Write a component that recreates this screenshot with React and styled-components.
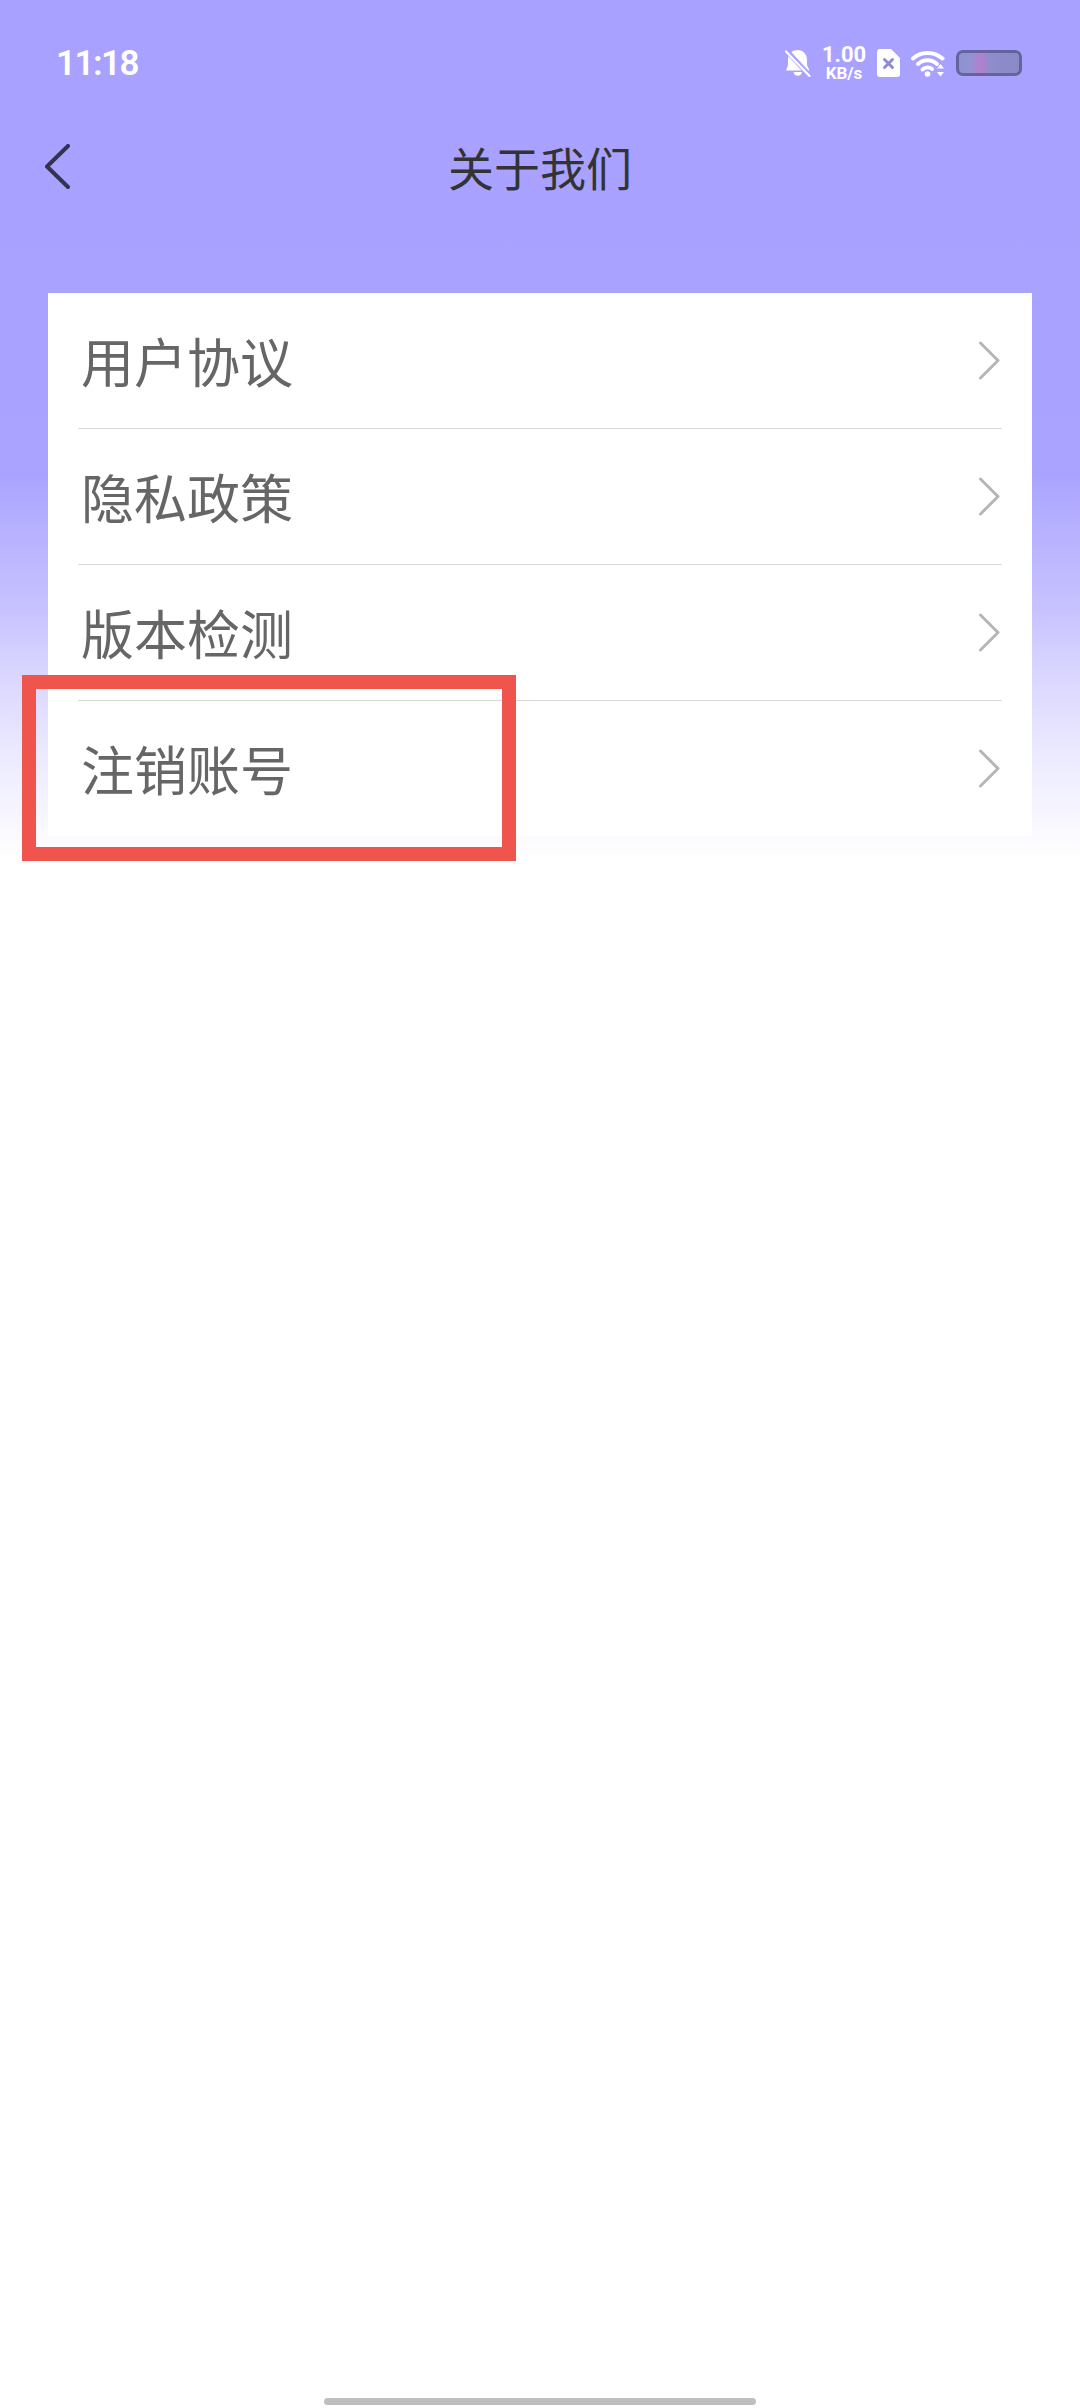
import React from 'react'
import styled, { createGlobalStyle } from 'styled-components'

const GlobalStyle = createGlobalStyle`
  html, body {
    margin: 0;
    padding: 0;
    background: #fff;
  }
`
const Page = styled.div`
  position: relative;
  display: flex;
  flex-direction: column;
  width: 1080px;
  height: 2408px;
  overflow: hidden;
  font-family: 'Noto Sans CJK SC', 'Noto Sans', sans-serif;
  background: linear-gradient(
    to bottom,
    #a8a1ff 0px,
    #a9a2ff 300px,
    #aaa3ff 470px,
    #c8c3ff 610px,
    #d6d2ff 660px,
    #ebe9ff 750px,
    #ffffff 860px
  );
`
const StatusBar = styled.div`
  display: flex;
  align-items: center;
  justify-content: space-between;
  height: 50px;
  margin-top: 38px;
  padding: 0 58px 0 56px;
`
const Clock = styled.span`
  font-family: Roboto, sans-serif;
  font-size: 35px;
  font-weight: 600;
  letter-spacing: -1.5px;
  color: #fff;
`
const StatusIcons = styled.div`
  display: flex;
  align-items: center;
`
const Speed = styled.div`
  display: flex;
  flex-direction: column;
  align-items: center;
  width: 44px;
  margin: 0 11px 0 11px;
  font-family: Roboto, sans-serif;
  font-weight: 700;
  color: #fff;
`
const SpeedValue = styled.span`
  font-size: 22px;
  line-height: 20px;
`
const SpeedUnit = styled.span`
  font-size: 17px;
  line-height: 16px;
`
const WifiSlot = styled.span`
  display: flex;
  margin: 0 11px;
`
const Battery = styled.div`
  display: flex;
  width: 66px;
  height: 26px;
  box-sizing: border-box;
  border: 3px solid #64649c;
  border-radius: 7px;
  background: linear-gradient(
    to right,
    #8f90cf 0%,
    #9293d2 18%,
    #a985d0 30%,
    #b47fcf 38%,
    #8e8cca 50%,
    #8a8ac6 100%
  );
`
const Header = styled.header`
  position: relative;
  display: flex;
  align-items: center;
  justify-content: center;
  height: 80px;
  margin-top: 41px;
`
const Title = styled.h1`
  margin: 0;
  padding-bottom: 6px;
  font-size: 46px;
  font-weight: 400;
  color: #333;
`
const BackIcon = styled.svg`
  position: absolute;
  left: 44px;
  top: 15px;
`
const Card = styled.ul`
  display: flex;
  flex-direction: column;
  margin: 84px 48px 0;
  padding: 0;
  list-style: none;
  background: #fff;
`
const Row = styled.li`
  display: flex;
  align-items: center;
  justify-content: space-between;
  box-sizing: border-box;
  height: ${(p) => (p.$first ? '135px' : '136px')};
  margin: 0 30px;
  padding-left: 3px;
  border-top: ${(p) => (p.$first ? 'none' : '1px solid #d9d9d9')};
`
const RowLabel = styled.span`
  padding-bottom: 1px;
  font-size: 53px;
  font-weight: 400;
  line-height: 1;
  color: #666;
`
const Highlight = styled.div`
  position: absolute;
  left: 22px;
  top: 675px;
  width: 494px;
  height: 186px;
  box-sizing: border-box;
  border: 14px solid #ef544d;
`
const HomeBar = styled.div`
  width: 432px;
  height: 7px;
  margin: auto auto 3px;
  border-radius: 4px;
  background: #bfbfbf;
`

const items = ['用户协议', '隐私政策', '版本检测', '注销账号']

const Chevron = () => (
  <svg width="24" height="40" viewBox="0 0 24 40" fill="none">
    <path d="M2.5 2 L20 19.5 L2.5 37" stroke="#b6b6b6" strokeWidth="3" strokeLinecap="round" strokeLinejoin="round" />
  </svg>
)

const MutedBell = () => (
  <svg width="26" height="28" viewBox="0 0 26 28" fill="none">
    <path d="M12.500 1c6 0 9.500 4.500 9.500 10v5l2.500 5.500H1L3 16v-5C3 5.500 6.500 1 12.500 1z" fill="#fff" />
    <path d="M8.500 23h8.500a4.300 4.300 0 0 1-8.500 0z" fill="#fff" />
    <path d="M1.500 1.500 L24.500 26.500" stroke="#a8a1ff" strokeWidth="5" />
    <path d="M1 2.500 L24.500 27" stroke="#fff" strokeWidth="2.200" strokeLinecap="round" />
  </svg>
)

const SimIcon = () => (
  <svg width="23" height="28" viewBox="0 0 23 28">
    <path d="M3 0h11l9 9v16a3 3 0 0 1-3 3H3a3 3 0 0 1-3-3V3a3 3 0 0 1 3-3z" fill="#fff" />
    <path d="M7.500 10.500l8 8M15.500 10.500l-8 8" stroke="#8f8ad6" strokeWidth="3" strokeLinecap="round" />
  </svg>
)

const WifiIcon = () => (
  <svg width="34" height="27" viewBox="0 0 34 27" fill="none">
    <path d="M2 8.500C10 1 23 1 31.500 8.500" stroke="#fff" strokeWidth="4" strokeLinecap="round" />
    <path d="M7 14C12.500 9 20.500 9 26 14" stroke="#fff" strokeWidth="4" strokeLinecap="round" />
    <path d="M11.500 19.500C14.500 17 18.500 17 21 19" stroke="#fff" strokeWidth="4" strokeLinecap="round" />
    <circle cx="16.500" cy="24" r="2.800" fill="#fff" />
    <path d="M29.500 14l3.500 4.500h-7zM29.500 26.500l-3.500-4.500h7z" fill="#fff" />
  </svg>
)

export default function App() {
  return (
    <Page>
      <GlobalStyle />
      <StatusBar>
        <Clock>11:18</Clock>
        <StatusIcons>
          <MutedBell />
          <Speed>
            <SpeedValue>1.00</SpeedValue>
            <SpeedUnit>KB/s</SpeedUnit>
          </Speed>
          <SimIcon />
          <WifiSlot>
            <WifiIcon />
          </WifiSlot>
          <Battery />
        </StatusIcons>
      </StatusBar>
      <Header>
        <BackIcon width="26" height="46" viewBox="0 0 26 46" fill="none">
          <path d="M24 2 L3 22.500 L24 43" stroke="#33334f" strokeWidth="4" strokeLinecap="round" strokeLinejoin="round" />
        </BackIcon>
        <Title>关于我们</Title>
      </Header>
      <Card>
        {items.map((item, i) => (
          <Row key={item} $first={i === 0}>
            <RowLabel>{item}</RowLabel>
            <Chevron />
          </Row>
        ))}
      </Card>
      <Highlight />
      <HomeBar />
    </Page>
  )
}
